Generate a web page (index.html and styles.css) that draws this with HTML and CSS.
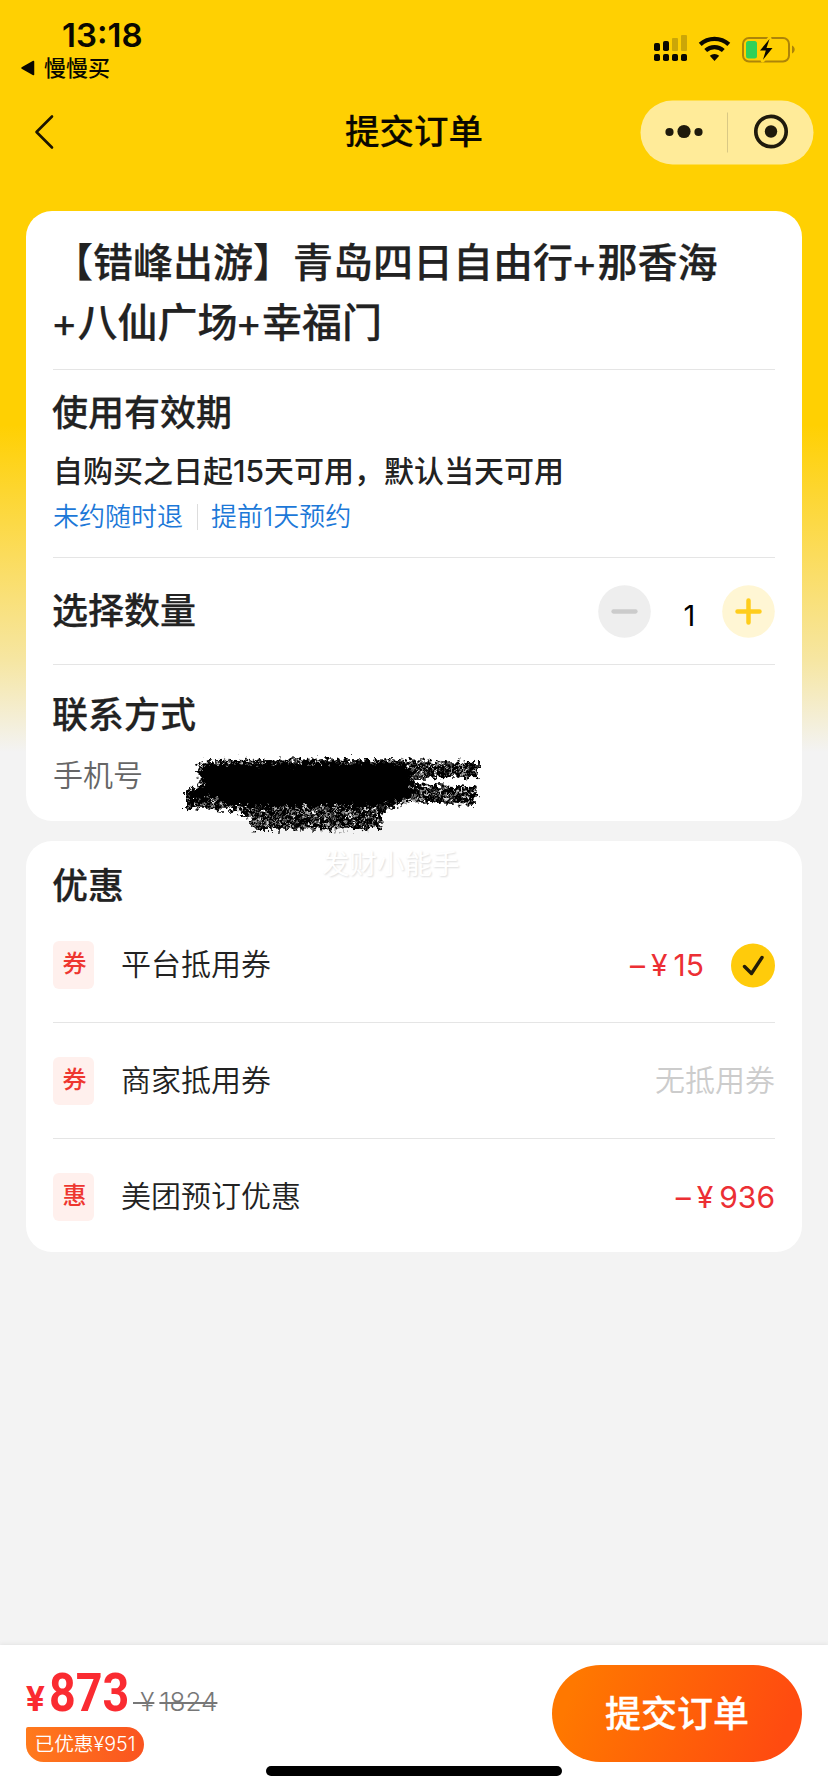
FILE: index.html
```html
<!DOCTYPE html>
<html lang="zh-CN">
<head>
<meta charset="utf-8">
<title>提交订单</title>
<link rel="stylesheet" href="styles.css">
</head>
<body>
<div class="screen">
  <header class="status">
    <div class="status-left">
      <div class="clock">13:18</div>
      <div class="return-app">
        <svg width="14" height="16" viewBox="0 0 14 16"><path d="M12.500 1.500v13L1 8z" stroke="#0a0800" stroke-width="1.500" stroke-linejoin="round" fill="#0a0800"/></svg>
        <span>慢慢买</span>
      </div>
    </div>
    <svg class="status-icons" width="144" height="30" viewBox="0 0 144 30">
      <g fill="#0a0800">
        <rect x="1" y="10" width="6" height="8" rx="1.800"/><rect x="10" y="8" width="6" height="10" rx="1.800"/>
        <rect x="1" y="21" width="6" height="7" rx="1.800"/><rect x="10" y="21" width="6" height="7" rx="1.800"/>
        <rect x="19" y="21" width="6" height="7" rx="1.800"/><rect x="28" y="21" width="6" height="7" rx="1.800"/>
      </g>
      <g fill="#cba608"><rect x="19" y="5" width="6" height="13" rx="1"/><rect x="28" y="2" width="6" height="16" rx="1"/></g>
      <g fill="none" stroke="#0a0800" stroke-width="4.200">
        <path d="M47.200 11.400a21 21 0 0 1 28.600 0"/><path d="M52.700 17.500a13 13 0 0 1 17.600 0"/>
      </g>
      <path d="M61.500 28l-4.700-5.200a7 7 0 0 1 9.400 0z" fill="#0a0800"/>
      <rect x="90" y="5" width="46" height="23.500" rx="6" fill="none" stroke="#ad8409" stroke-width="2"/>
      <path d="M139 12.500c3.600 1.600 3.600 6.500 0 8z" fill="#ad8409"/>
      <rect x="93" y="8" width="11" height="17.500" rx="2.500" fill="#30d158"/>
      <path d="M116.500 5.500L106.500 18h6.200l-3 9.500 10.300-12.800h-6.400z" fill="#0a0800" stroke="#ffd002" stroke-width="4" stroke-linejoin="round"/>
      <path d="M116.500 6L107 17.500h5.800l-2.800 9.300 9.500-11.900h-6z" fill="#0a0800"/>
    </svg>
  </header>

  <nav class="navbar">
    <svg class="back" width="24" height="40" viewBox="0 0 24 40"><path d="M20 4.500L4.500 20 20 35.500" fill="none" stroke="#1c1500" stroke-width="2.600" stroke-linecap="round" stroke-linejoin="round"/></svg>
    <h1 class="nav-title">提交订单</h1>
    <svg class="capsule" width="174" height="65" viewBox="0 0 174 65">
      <rect x=".5" y=".5" width="173" height="64" rx="32" fill="#ffeb99"/>
      <g fill="#1f1a0c"><circle cx="29.500" cy="32" r="4.100"/><circle cx="44" cy="31.500" r="6.600"/><circle cx="58.500" cy="32" r="4.100"/><circle cx="131" cy="31.500" r="6.200"/></g>
      <path d="M87.500 12.500v40" stroke="#d9c885"/>
      <circle cx="131" cy="31.500" r="15.200" fill="none" stroke="#1f1a0c" stroke-width="3.700"/>
    </svg>
  </nav>

  <main class="content">
    <section class="card order">
      <h2 class="product">【错峰出游】青岛四日自由行<span class="plus">+</span>那香海<br><span class="plus">+</span>八仙广场<span class="plus">+</span>幸福门</h2>
      <div class="validity">
        <h3 class="heading">使用有效期</h3>
        <p class="rule">自购买之日起15天可用，默认当天可用</p>
        <p class="tags"><span>未约随时退</span><span class="tag-next">提前1天预约</span></p>
      </div>
      <div class="quantity">
        <h3 class="heading">选择数量</h3>
        <div class="stepper">
          <svg width="53" height="53" viewBox="0 0 53 53"><circle cx="26.500" cy="26.500" r="26.300" fill="#eeeeee"/><path d="M15.500 26.500h22" stroke="#cbcbcb" stroke-width="4.300" stroke-linecap="round"/></svg>
          <span class="count">1</span>
          <svg width="53" height="53" viewBox="0 0 53 53"><circle cx="26.500" cy="26.500" r="26.300" fill="#fff6d4"/><path d="M15.500 26.500h22M26.500 15.500v22" stroke="#ffcd1c" stroke-width="4.500" stroke-linecap="round"/></svg>
        </div>
      </div>
      <div class="contact">
        <h3 class="heading">联系方式</h3>
        <p class="phone">手机号</p>
        <svg class="scribble" width="330" height="110" viewBox="0 0 330 110">
          <defs>
            <filter id="chalk" x="-5%" y="-15%" width="110%" height="130%">
              <feTurbulence type="fractalNoise" baseFrequency=".22" numOctaves="2" seed="4" result="n"/>
              <feDisplacementMap in="SourceGraphic" in2="n" scale="15" xChannelSelector="R" yChannelSelector="G" result="d"/>
              <feGaussianBlur in="d" stdDeviation=".6"/>
            </filter>
            <filter id="grain" x="-5%" y="-10%" width="110%" height="120%">
              <feTurbulence type="fractalNoise" baseFrequency=".24" numOctaves="2" seed="9" result="n"/>
              <feColorMatrix in="n" values="0 0 0 0 0  0 0 0 0 0  0 0 0 0 0  0 0 0 3 -.600" result="m"/>
              <feComposite in="SourceGraphic" in2="m" operator="in" result="g"/>
              <feDisplacementMap in="g" in2="n" scale="14" xChannelSelector="R" yChannelSelector="G" result="d"/>
              <feGaussianBlur in="d" stdDeviation=".6"/>
            </filter>
          </defs>
          <g filter="url(#grain)">
            <path d="M38 20Q28 22 27 31L30 46L16 50L16 68L60 70L78 76L83 90L212 89L214 70L238 62L306 65L306 47L245 44L245 39L308 37L308 22L200 19Z"/>
          </g>
          <path filter="url(#chalk)" d="M40 25L225 23L242 30L238 41L246 50L238 58L205 66L60 66L42 57L20 60L20 53L36 44L30 38L30 31Z"/>
        </svg>
      </div>
    </section>

    <section class="card discounts">
      <h3 class="heading">优惠</h3>
      <div class="watermark">发财小能手</div>
      <div class="row">
        <span class="chip">券</span><span class="label">平台抵用券</span>
        <span class="amount">–<i class="yen">¥</i>15</span>
        <svg class="check" width="44" height="45" viewBox="0 0 44 45"><circle cx="22" cy="22.500" r="22" fill="#ffcb0b"/><path d="M13.500 23.500l7 7L31 14.500" fill="none" stroke="#231c08" stroke-width="3.400" stroke-linecap="round" stroke-linejoin="round"/></svg>
      </div>
      <div class="row">
        <span class="chip">券</span><span class="label">商家抵用券</span><span class="none">无抵用券</span>
      </div>
      <div class="row">
        <span class="chip">惠</span><span class="label">美团预订优惠</span><span class="amount">–<i class="yen">¥</i>936</span>
      </div>
    </section>
  </main>

  <footer class="paybar">
    <div class="totals">
      <div class="prices"><span class="currency">¥</span><span class="total">873</span><s class="original">&nbsp;¥<span class="digits">1824</span></s></div>
      <span class="saved">已优惠¥951</span>
    </div>
    <button class="submit">提交订单</button>
    <div class="home-indicator"></div>
  </footer>
</div>
</body>
</html>
```
FILE: styles.css
```css
* { box-sizing: border-box; margin: 0; padding: 0; }

body {
  font-family: Inter, "Noto Sans CJK SC", sans-serif;
  color: #222;
  background: #f3f3f3;
}

svg { display: block; flex: none; }
h1, h2, h3 { font-weight: 500; }

.screen {
  width: 828px;
  height: 1792px;
  overflow: hidden;
  display: flex;
  flex-direction: column;
  background: linear-gradient(#ffd002 0, #ffd002 425px, #fbdc5c 555px, #f6e6a2 660px, #f3f3f3 752px);
}

/* Status bar */
.status {
  height: 88px;
  padding: 15px 33px 0 21px;
  display: flex;
  justify-content: space-between;
  color: #0a0800;
}
.clock {
  padding-left: 41px;
  font-size: 33px;
  line-height: 40px;
  font-weight: 600;
}
.return-app {
  display: flex;
  align-items: center;
  gap: 9px;
  font-size: 22px;
  line-height: 26px;
  font-weight: 500;
}
.status-icons { margin: 18px -2px 0 0; }

/* Navigation */
.navbar {
  height: 88px;
  padding: 0 14px 0 32px;
  display: grid;
  grid-template-columns: 1fr auto 1fr;
  align-items: center;
  color: #0a0800;
}
.nav-title {
  font-size: 34.500px;
  line-height: 50px;
  padding-right: 18px;
  -webkit-text-stroke: .2px #0a0800;
}
.capsule { justify-self: end; }

/* Cards */
.content {
  flex: 1;
  padding: 35px 26px 0;
  display: flex;
  flex-direction: column;
  gap: 20px;
}
.card {
  background: #fff;
  border-radius: 26px;
  padding: 0 27px;
}
.heading {
  margin-left: -1px;
  font-size: 36px;
  line-height: 50px;
  -webkit-text-stroke: .25px #222;
}
.order { height: 610px; }
.product {
  height: 159px;
  padding-top: 22px;
  font-size: 40px;
  line-height: 60px;
  border-bottom: 1px solid #e5e5e5;
  -webkit-text-stroke: .25px #222;
}
.plus { margin: 0 0 0 -2px; font-weight: 400; }
.validity {
  height: 188px;
  padding-top: 18px;
  border-bottom: 1px solid #e5e5e5;
}
.rule {
  margin-top: 13px;
  font-size: 30px;
  line-height: 40px;
  font-weight: 500;
}
.tags {
  margin-top: 9px;
  display: flex;
  align-items: center;
  font-size: 26px;
  line-height: 34px;
  font-weight: 350;
  color: #1c78d8;
}
.tag-next { margin-left: 14px; padding-left: 14px; position: relative; }
.tag-next::before {
  content: "";
  position: absolute;
  left: 0;
  top: 4px;
  height: 26px;
  border-left: 1px solid #ddd;
}
.quantity {
  height: 107px;
  display: flex;
  align-items: center;
  justify-content: space-between;
  border-bottom: 1px solid #e5e5e5;
}
.stepper { display: flex; align-items: center; }
.count {
  width: 71px;
  padding: 9px 0 0 6px;
  text-align: center;
  font-size: 29px;
  line-height: 40px;
  color: #000;
}
.contact { padding-top: 25px; position: relative; }
.phone {
  margin-top: 15px;
  font-size: 30px;
  line-height: 40px;
  font-weight: 350;
  color: #666;
}
.scribble { position: absolute; left: 117px; top: 75px; }

.discounts { height: 411px; padding-top: 20px; position: relative; }
.watermark {
  position: absolute;
  left: 296px;
  top: 3px;
  font-size: 27.500px;
  line-height: 40px;
  color: #fff;
  text-shadow: 1px 1px 2px #ddd;
}
.row {
  height: 116px;
  display: flex;
  align-items: center;
  border-bottom: 1px solid #e5e5e5;
  font-size: 30px;
  line-height: 44px;
  font-weight: 350;
}
.heading ~ .watermark + .row { height: 112px; padding-bottom: 3px; }
.row:last-child { border-bottom: 0; }
.chip {
  width: 41px;
  height: 48px;
  padding-left: 2px;
  border-radius: 6px;
  background: #fff0ed;
  color: #ee3730;
  font-size: 24px;
  line-height: 46px;
  font-weight: 500;
  text-align: center;
}
.label { margin: -2px 0 0 27px; flex: 1; }
.amount { margin-top: -1px; color: #ec2f34; font-size: 30px; font-weight: 400; }
.yen { font-style: normal; margin: 0 6px; }
.check { margin-left: 27px; }
.none { margin-top: -2px; color: #ccc; }

/* Payment bar */
.paybar {
  height: 147px;
  padding: 20px 26px 0;
  display: flex;
  justify-content: space-between;
  position: relative;
  background: #fff;
  box-shadow: 0 -1px 4px #e3e3e3;
}
.prices {
  height: 62px;
  padding-top: 3px;
  display: flex;
  align-items: baseline;
  line-height: 50px;
  color: #fa2b31;
  font-weight: 700;
}
.currency { font-size: 35px; font-family: Roboto, sans-serif; }
.total {
  margin: 0 -11px 0 4px;
  font-family: Roboto, sans-serif;
  font-size: 53px;
  transform: scaleX(.88);
  transform-origin: left;
}
.original {
  margin-left: 4px;
  font-size: 26px;
  font-weight: 350;
  color: #777;
  text-decoration-thickness: 2px;
}
.digits { margin-left: 5px; }
.saved {
  display: block;
  width: 118px;
  height: 35px;
  border-radius: 2px 18px 18px 18px;
  background: linear-gradient(90deg, #ff7a1c, #fa5420);
  color: #fff;
  font-size: 19.700px;
  line-height: 34px;
  font-weight: 350;
  text-align: center;
}
.submit {
  width: 250px;
  height: 97px;
  border: 0;
  border-radius: 49px;
  background: linear-gradient(110deg, #ff7800 10%, #ff4b10 90%);
  color: #fff;
  font: 500 36px/50px Inter, "Noto Sans CJK SC", sans-serif;
  -webkit-text-stroke: .3px #fff;
}
.home-indicator {
  position: absolute;
  left: 266px;
  top: 121px;
  width: 296px;
  height: 10px;
  border-radius: 5px;
  background: #000;
}
```
